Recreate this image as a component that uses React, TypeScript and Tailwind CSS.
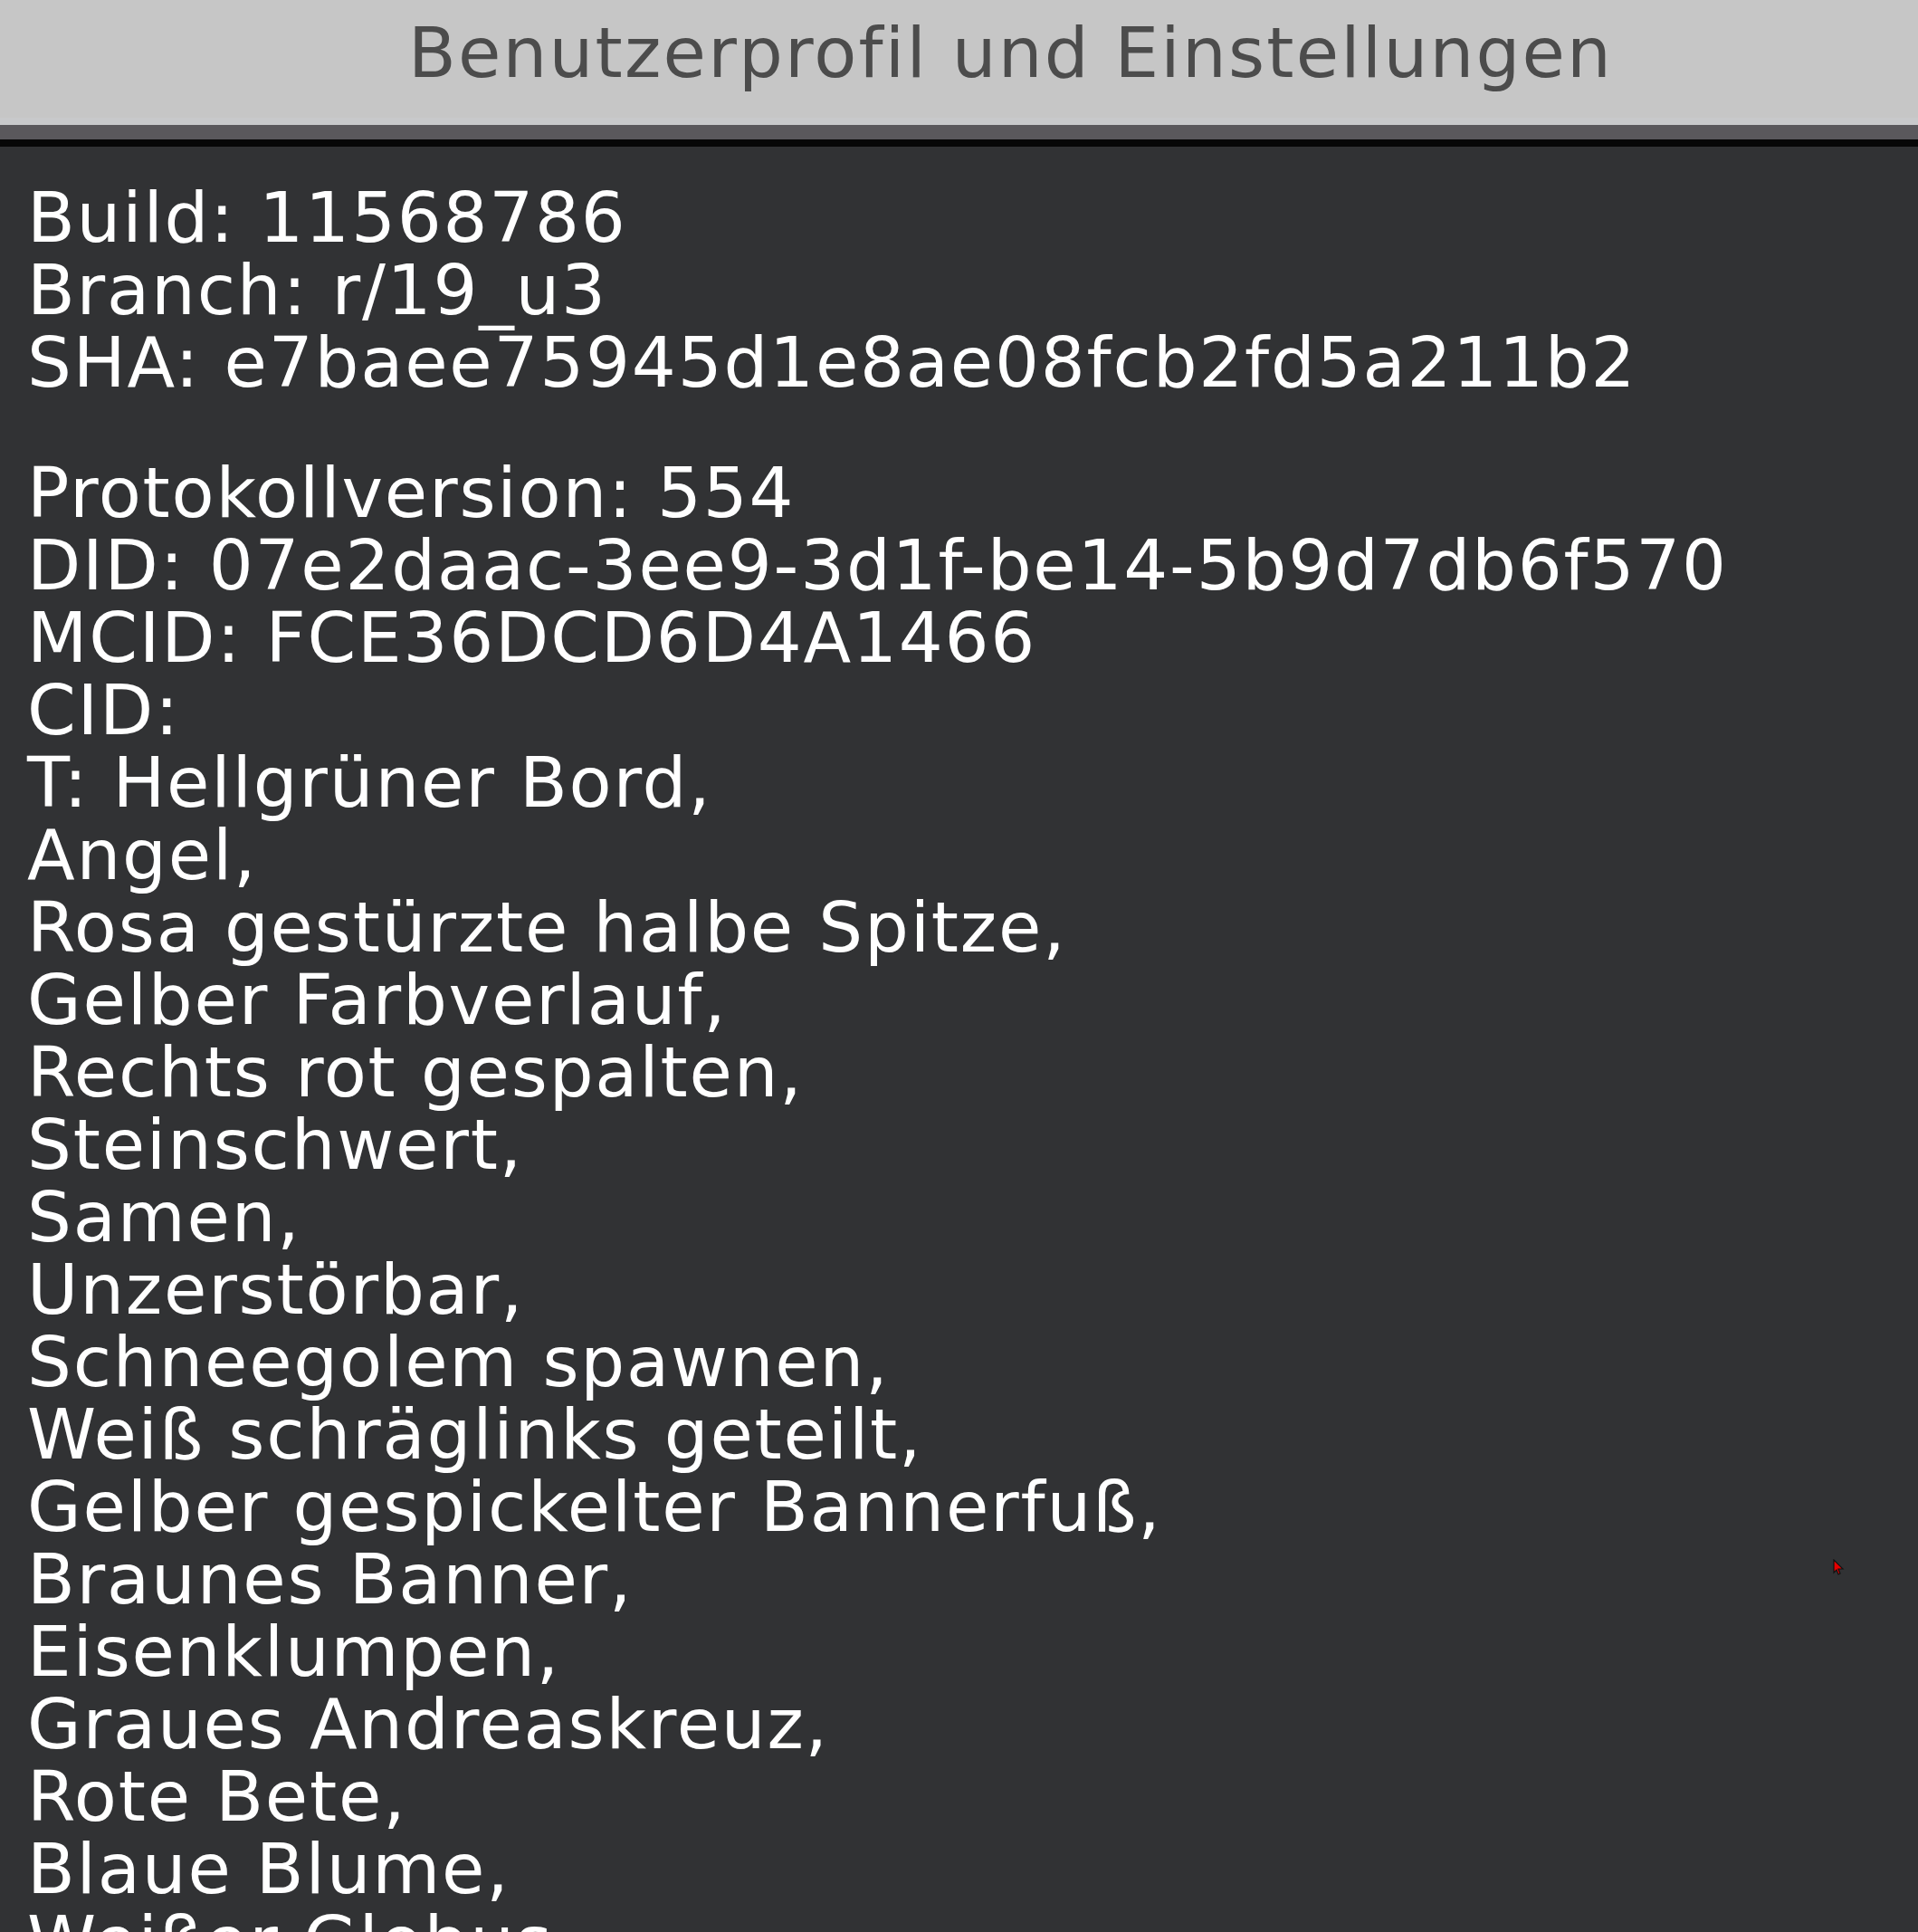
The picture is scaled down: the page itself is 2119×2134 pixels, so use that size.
import React from 'react';

const HEAD_LINES = ['Build: 11568786', 'Branch: r/19_u3', 'SHA: e7baee75945d1e8ae08fcb2fd5a211b2'];

const INFO_LINES = [
  'Protokollversion: 554',
  'DID: 07e2daac-3ee9-3d1f-be14-5b9d7db6f570',
  'MCID: FCE36DCD6D4A1466',
  'CID:',
  'T: Hellgrüner Bord,',
  'Angel,',
  'Rosa gestürzte halbe Spitze,',
  'Gelber Farbverlauf,',
  'Rechts rot gespalten,',
  'Steinschwert,',
  'Samen,',
  'Unzerstörbar,',
  'Schneegolem spawnen,',
  'Weiß schräglinks geteilt,',
  'Gelber gespickelter Bannerfuß,',
  'Braunes Banner,',
  'Eisenklumpen,',
  'Graues Andreaskreuz,',
  'Rote Bete,',
  'Blaue Blume,',
  'Weißer Globus,',
  'Orange Raute,',
];

const Cursor: React.FC = () => (
  <svg width="13" height="18" viewBox="0 0 13 18" className="absolute left-[2025px] top-[1722px]">
    <path d="M1 1 L1 15 L4 12 L6 17 L8 16 L6 11 L11 11 Z" fill="#e80000" stroke="#111" strokeWidth="1.2" strokeLinejoin="miter" />
  </svg>
);

const App: React.FC = () => {
  return (
    <div className="relative w-[2119px] h-[2134px] overflow-hidden bg-[#313234] font-['DejaVu_Sans',sans-serif]">
      <header>
        <div className="h-[130px] bg-[#c6c6c6] flex justify-center pl-[114px] pt-[19px]">
          <h1 className="text-[77px] leading-[80px] tracking-[2.2px] text-[#4c4c4c] whitespace-nowrap">
            Benutzerprofil und Einstellungen
          </h1>
        </div>
        <div className="h-[8px] bg-[#c8c9cb]" />
        <div className="h-[16px] bg-[#5a585c]" />
        <div className="h-[8px] bg-[#070707]" />
      </header>

      <main className="pt-[39px] pl-[30px] text-white text-[77px] leading-[80px] tracking-[1.8px] whitespace-nowrap">
        {HEAD_LINES.map((line) => (
          <div key={line}>{line}</div>
        ))}
        <div className="h-[64px]" />
        {INFO_LINES.map((line) => (
          <div key={line}>{line}</div>
        ))}
      </main>

      <Cursor />
    </div>
  );
};

export default App;
